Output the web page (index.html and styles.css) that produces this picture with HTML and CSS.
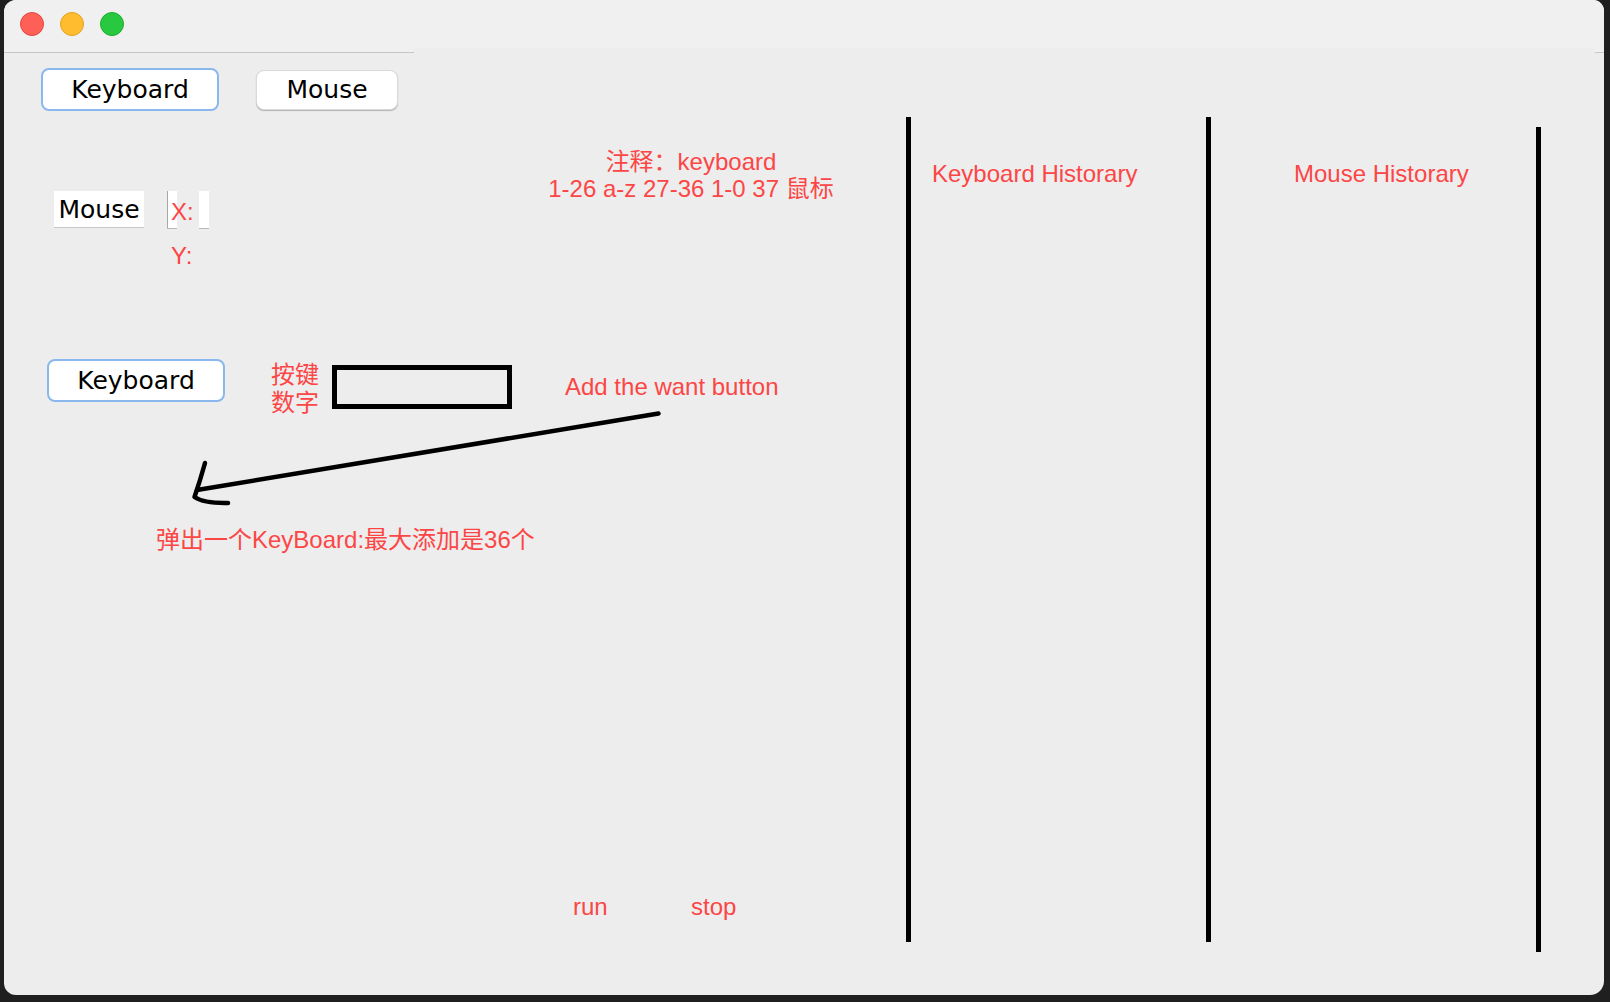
FILE: index.html
```html
<!DOCTYPE html>
<html lang="zh">
<head>
<meta charset="utf-8">
<title>Keyboard Mouse</title>
<link rel="stylesheet" href="styles.css">
</head>
<body>
<div class="window">
  <div class="titlebar">
    <span class="light red"></span>
    <span class="light yellow"></span>
    <span class="light green"></span>
  </div>
  <div class="content">
    <section class="left">
      <div class="strip"></div>
      <div class="top-buttons">
        <button class="btn btn-focus">Keyboard</button>
        <button class="btn btn-plain">Mouse</button>
      </div>
      <div class="mid-row">
        <div class="mouse-label">Mouse</div>
        <div class="xy">
          <div class="x-row">
            <span class="field field-a"></span>
            <span class="red-text x-label">X:</span>
            <span class="field field-b"></span>
          </div>
          <div class="red-text y-label">Y:</div>
        </div>
        <div class="red-text note">注释：keyboard<br>1-26 a-z 27-36 1-0 37 鼠标</div>
      </div>
      <div class="key-row">
        <button class="btn btn-focus btn-key">Keyboard</button>
        <div class="red-text key-label">按键<br>数字</div>
        <div class="key-box"></div>
        <div class="red-text add-note">Add the want button</div>
      </div>
      <div class="red-text popup-note">弹出一个KeyBoard:最大添加是36个</div>
      <div class="run-row">
        <span class="red-text run">run</span>
        <span class="red-text stop">stop</span>
      </div>
    </section>
    <div class="vline"></div>
    <section class="col col-kb">
      <h2 class="red-text col-title">Keyboard Historary</h2>
    </section>
    <div class="vline"></div>
    <section class="col col-mouse">
      <h2 class="red-text col-title">Mouse Historary</h2>
    </section>
    <div class="vline vline-low"></div>
    <div class="right-edge"><div class="edge-strip"></div></div>
  </div>
  <svg class="arrow" viewBox="4 0 1600 995" width="1600" height="995" aria-hidden="true">
    <path d="M658.5 413.5 L197 490" />
    <path d="M205 463 Q200 481 194.5 497 Q204 503.5 228 503" />
  </svg>
</div>
</body>
</html>
```
FILE: styles.css
```css
html, body {
  margin: 0;
  padding: 0;
}

body {
  background: #1f1f1f;
  width: 1610px;
  height: 1002px;
  overflow: hidden;
}

.window {
  position: relative;
  margin-left: 4px;
  width: 1600px;
  height: 995px;
  background: #ededed;
  border-radius: 12px 11px 14px 12px;
  overflow: hidden;
}

.titlebar {
  height: 48px;
  background: #eff0ef;
  display: flex;
  align-items: center;
  gap: 16px;
  padding-left: 16px;
  box-sizing: border-box;
}

.light {
  width: 24px;
  height: 24px;
  border-radius: 50%;
  box-sizing: border-box;
}
.red { background: #fe5f57; border: 1px solid #e2463f; }
.yellow { background: #febc2e; border: 1px solid #e1a123; }
.green { background: #28c840; border: 1px solid #1eab2f; }

.content {
  display: flex;
  align-items: flex-start;
  height: 947px;
}

.left {
  width: 902px;
  flex: none;
}

.strip {
  width: 410px;
  height: 4px;
  background: #eff0ef;
  border-bottom: 1px solid #c6c6c6;
}

.btn {
  font-family: "DejaVu Sans", "Liberation Sans", sans-serif;
  font-size: 25px;
  color: #000;
  background: #fff;
  box-sizing: border-box;
  border-radius: 8px;
  display: flex;
  align-items: center;
  justify-content: center;
  padding: 0;
  margin: 0;
}

.btn-focus {
  width: 178px;
  height: 43px;
  border: 2px solid #8ab8ee;
}

.btn-plain {
  width: 142px;
  height: 40px;
  border: 1px solid #d9d9d9;
  box-shadow: 0 1px 1px rgba(0, 0, 0, 0.25);
}

.top-buttons {
  display: flex;
  align-items: center;
  gap: 37px;
  margin-top: 15px;
  padding-left: 37px;
}

.red-text {
  font-family: "Liberation Sans", "Noto Sans CJK SC", sans-serif;
  font-size: 24px;
  line-height: 27px;
  color: #fc4646;
  font-weight: normal;
  margin: 0;
}

.mid-row {
  display: flex;
  align-items: flex-start;
  height: 248px;
}

.mouse-label {
  margin-left: 50px;
  margin-top: 80px;
  width: 90px;
  height: 36px;
  background: #fff;
  box-shadow: 0 1px 0 #c9c9c9;
  font-family: "DejaVu Sans", "Liberation Sans", sans-serif;
  font-size: 25px;
  display: flex;
  align-items: center;
  justify-content: center;
  color: #000;
}

.xy {
  width: 42px;
  margin-left: 23px;
  margin-top: 80px;
}

.x-row {
  display: flex;
  align-items: flex-start;
  height: 37px;
}

.field {
  width: 10px;
  height: 37px;
  background: #fff;
  box-shadow: 0 1px 0 #b8b8b8;
  flex: none;
}

.field-a {
  border-left: 1px solid #a8a8a8;
  box-sizing: border-box;
}

.x-label {
  margin-left: -6px;
  margin-top: 7px;
  position: relative;
  white-space: nowrap;
}

.field-b {
  margin-left: 5px;
}

.y-label {
  margin-top: 14px;
  padding-left: 4px;
}

.note {
  margin-left: 332px;
  margin-top: 37px;
  width: 300px;
  text-align: center;
  white-space: nowrap;
}

.key-row {
  display: flex;
  align-items: flex-start;
  height: 56px;
}

.btn-key {
  margin-left: 43px;
}

.key-label {
  margin-left: 46px;
  margin-top: 2px;
  line-height: 28px;
  width: 48px;
}

.key-box {
  margin-left: 13px;
  margin-top: 6px;
  width: 180px;
  height: 44px;
  border: 5px solid #000;
  box-sizing: border-box;
}

.add-note {
  margin-left: 53px;
  margin-top: 14px;
  white-space: nowrap;
}

.popup-note {
  margin-top: 111px;
  padding-left: 152px;
  white-space: nowrap;
}

.run-row {
  display: flex;
  margin-top: 340px;
  padding-left: 569px;
}

.run {
  width: 118px;
}

.vline {
  width: 5px;
  height: 825px;
  margin-top: 69px;
  background: #000;
  flex: none;
}

.vline-low {
  margin-top: 79px;
}

.col {
  flex: none;
}

.col-kb {
  width: 295px;
  padding-left: 21px;
  box-sizing: border-box;
}

.col-mouse {
  width: 325px;
  padding-left: 83px;
  box-sizing: border-box;
}

.col-title {
  margin-top: 112px;
  white-space: nowrap;
}

.right-edge {
  flex: 1;
  display: flex;
  justify-content: flex-end;
}

.edge-strip {
  width: 9px;
  height: 4px;
  background: #eff0ef;
  border-bottom: 1px solid #c6c6c6;
}

.arrow {
  position: absolute;
  left: 0;
  top: 0;
  pointer-events: none;
}

.arrow path {
  fill: none;
  stroke: #000;
  stroke-width: 4.5;
  stroke-linecap: round;
  stroke-linejoin: round;
}
```
